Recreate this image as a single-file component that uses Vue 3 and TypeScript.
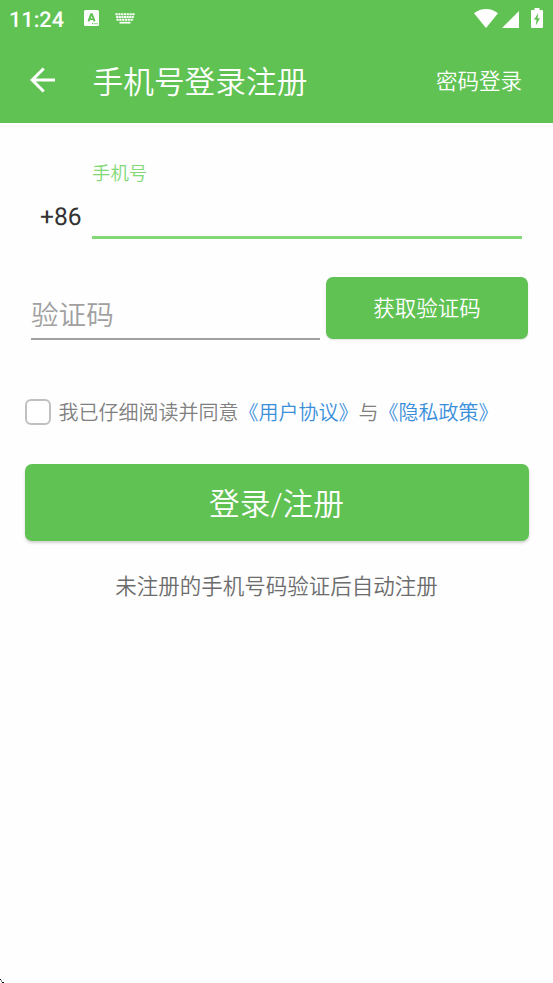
<script setup lang="ts">
import { ref } from 'vue'

const phone = ref<string>('')
const code = ref<string>('')
const agreed = ref<boolean>(false)
</script>

<template>
  <div class="screen">
    <header class="top">
      <div class="status">
        <span class="time">11:24</span>
        <svg class="ic-a" viewBox="0 0 15 16" width="15" height="16">
          <rect width="15" height="16" rx="1.5" fill="#fff" />
          <path d="M4.400 11.300 7.100 4.300h.8l2.700 7M5.300 9.100h4.400" fill="none" stroke="#60c253" stroke-width="1.900" />
          <path d="M8 13h1.200v1.200H8zM10.300 13h1.200v1.200h-1.200zM12.500 13h1.200v1.200h-1.200z" fill="#60c253" />
        </svg>
        <svg class="ic-k" viewBox="0 0 20 11" width="20" height="11">
          <g stroke="#fff" stroke-width="2" fill="none">
            <path d="M.5 1.300h19" stroke-dasharray="2.200 .6" />
            <path d="M1.200 4h17.600" stroke-dasharray="2.100 .5" />
            <path d="M1.500 6.700h17" stroke-dasharray="2.200 .6" />
            <path d="M4.500 9.700h11" stroke-width="1.800" />
          </g>
        </svg>
        <svg class="ic-w" viewBox="0 0 24 19" width="24" height="19">
          <path d="M0 4.300C7-1.400 17-1.400 24 4.300L12 19z" fill="#fff" />
        </svg>
        <svg class="ic-s" viewBox="0 0 17 17" width="17" height="17">
          <path d="M17 0v17H0z" fill="#fff" />
        </svg>
        <svg class="ic-b" viewBox="0 0 12 20" width="12" height="20">
          <path d="M3.500 0h5v2H11q1 0 1 1v16q0 1-1 1H1q-1 0-1-1V3q0-1 1-1h2.500z" fill="#fff" />
          <path d="M7.300 5 3 11.800h2.500L4.800 17.500 9 10.300H6.600z" fill="#60c253" />
        </svg>
      </div>
      <nav class="bar">
        <svg class="back" viewBox="0 0 26 26" width="26" height="26">
          <path d="M25 13H3M13.700 1.500 2.200 13l11.500 11.500" fill="none" stroke="#fff" stroke-width="3.100" />
        </svg>
        <h1 class="title">手机号登录注册</h1>
        <a class="switch">密码登录</a>
      </nav>
    </header>

    <main class="form">
      <section class="phone">
        <span class="prefix">+86</span>
        <label class="phone-field">
          <span class="phone-label">手机号</span>
          <input v-model="phone" class="input" type="tel" />
        </label>
      </section>
      <section class="verify">
        <input v-model="code" class="input code" type="text" placeholder="验证码" />
        <button class="btn get-code" type="button">获取验证码</button>
      </section>
      <label class="agree">
        <input v-model="agreed" class="box" type="checkbox" />
        <span class="terms">我已仔细阅读并同意<a class="link">《用户协议》</a>与<a class="link">《隐私政策》</a></span>
      </label>
      <button class="btn submit" type="button">登录/注册</button>
      <p class="note">未注册的手机号码验证后自动注册</p>
    </main>

    <svg class="corner" viewBox="0 0 4 4" width="4" height="4">
      <path d="M0 0h1v1H0zM1 1.500h1v1H1zM2 3h2v1H2z" fill="#111" />
    </svg>
  </div>
</template>

<style>
body {
  background: #fefefe;
}
</style>

<style scoped>
.screen {
  display: flex;
  flex-direction: column;
  box-sizing: border-box;
  width: 553px;
  height: 983px;
  overflow: hidden;
  background: #fefefe;
  font-family: Roboto, 'Noto Sans CJK SC', sans-serif;
  font-weight: 350;
}
.top {
  height: 123px;
  flex: none;
  background: #60c253;
  color: #fff;
}
.status {
  display: flex;
  align-items: flex-start;
  height: 37px;
  padding: 0 10px 0 9px;
}
.time {
  width: 75px;
  margin-top: 7px;
  font-size: 21.7px;
  line-height: 26px;
  font-weight: 500;
  text-rendering: geometricPrecision;
  padding-top: 1px;
}
.ic-a { margin-top: 10px; }
.ic-k { margin: 13px 0 0 16px; }
.ic-w { margin: 9px 0 0 auto; }
.ic-s { margin: 11px 0 0 4px; }
.ic-b { margin: 8px 0 0 12px; }
.bar {
  display: flex;
  align-items: center;
  height: 86px;
  padding: 0 31px 0 30px;
}
.back { flex: none; }
.title {
  margin: 0 auto 0 36.5px;
  padding-top: 5px;
  font-size: 30.7px;
  line-height: 40px;
  font-weight: inherit;
}
.switch {
  padding-top: 3px;
  font-size: 21.5px;
  line-height: 32px;
}
.form {
  display: flex;
  flex-direction: column;
  padding: 0 24.5px;
}
.phone {
  display: flex;
  align-items: flex-end;
  height: 116px;
  padding-right: 6.5px;
}
.prefix {
  width: 52px;
  padding-left: 15.5px;
  margin-bottom: 4px;
  font-size: 24.6px;
  font-weight: 400;
  line-height: 34px;
  color: #333;
  text-rendering: geometricPrecision;
}
.phone-field {
  display: flex;
  flex: 1;
  flex-direction: column;
  border-bottom: 3px solid #80d975;
}
.phone-label {
  font-size: 18.4px;
  line-height: 26px;
  color: #80d975;
}
.input {
  box-sizing: border-box;
  width: 100%;
  min-width: 0;
  height: 49px;
  padding: 0;
  border: 0;
  outline: 0;
  background: transparent;
  font: inherit;
  font-size: 27.6px;
  color: #333;
}
.verify {
  display: flex;
  align-items: flex-start;
  margin-top: 38px;
  padding-left: 6.5px;
}
.code {
  width: 289px;
  height: 63px;
  padding-top: 15px;
  border-bottom: 2px solid #a0a0a0;
}
.code::placeholder {
  color: #a0a0a0;
  opacity: 1;
}
.btn {
  border: 0;
  border-radius: 7px;
  background: #60c253;
  box-shadow: 0 2px 3px rgba(0, 0, 0, 0.18);
  font-family: inherit;
  font-weight: inherit;
  color: #fff;
}
.get-code {
  width: 202px;
  height: 61.5px;
  margin-left: 6px;
  padding: 0 0 2px;
  font-size: 21.5px;
  box-shadow: 0 1px 2px rgba(0, 0, 0, 0.12);
}
.agree {
  display: flex;
  align-items: center;
  height: 30px;
  margin-top: 57px;
}
.box {
  box-sizing: border-box;
  width: 26px;
  height: 26px;
  margin: 0;
  appearance: none;
  border: 2px solid #c0c0c0;
  border-radius: 6px;
  background: #fff;
}
.box:checked {
  border-color: #60c253;
  background: #60c253;
}
.terms {
  margin-left: 8px;
  padding-top: 2px;
  font-size: 20px;
  line-height: 30px;
  white-space: nowrap;
  color: #808080;
}
.link { color: #3a8fdb; }
.submit {
  height: 77px;
  margin-top: 37px;
  padding: 0 0 2px;
  font-size: 30.7px;
}
.note {
  margin: 30px 0 0;
  font-size: 21.5px;
  line-height: 32px;
  text-align: center;
  color: #6c6c6c;
}
.corner {
  position: absolute;
  left: 0;
  top: 979px;
}
</style>
